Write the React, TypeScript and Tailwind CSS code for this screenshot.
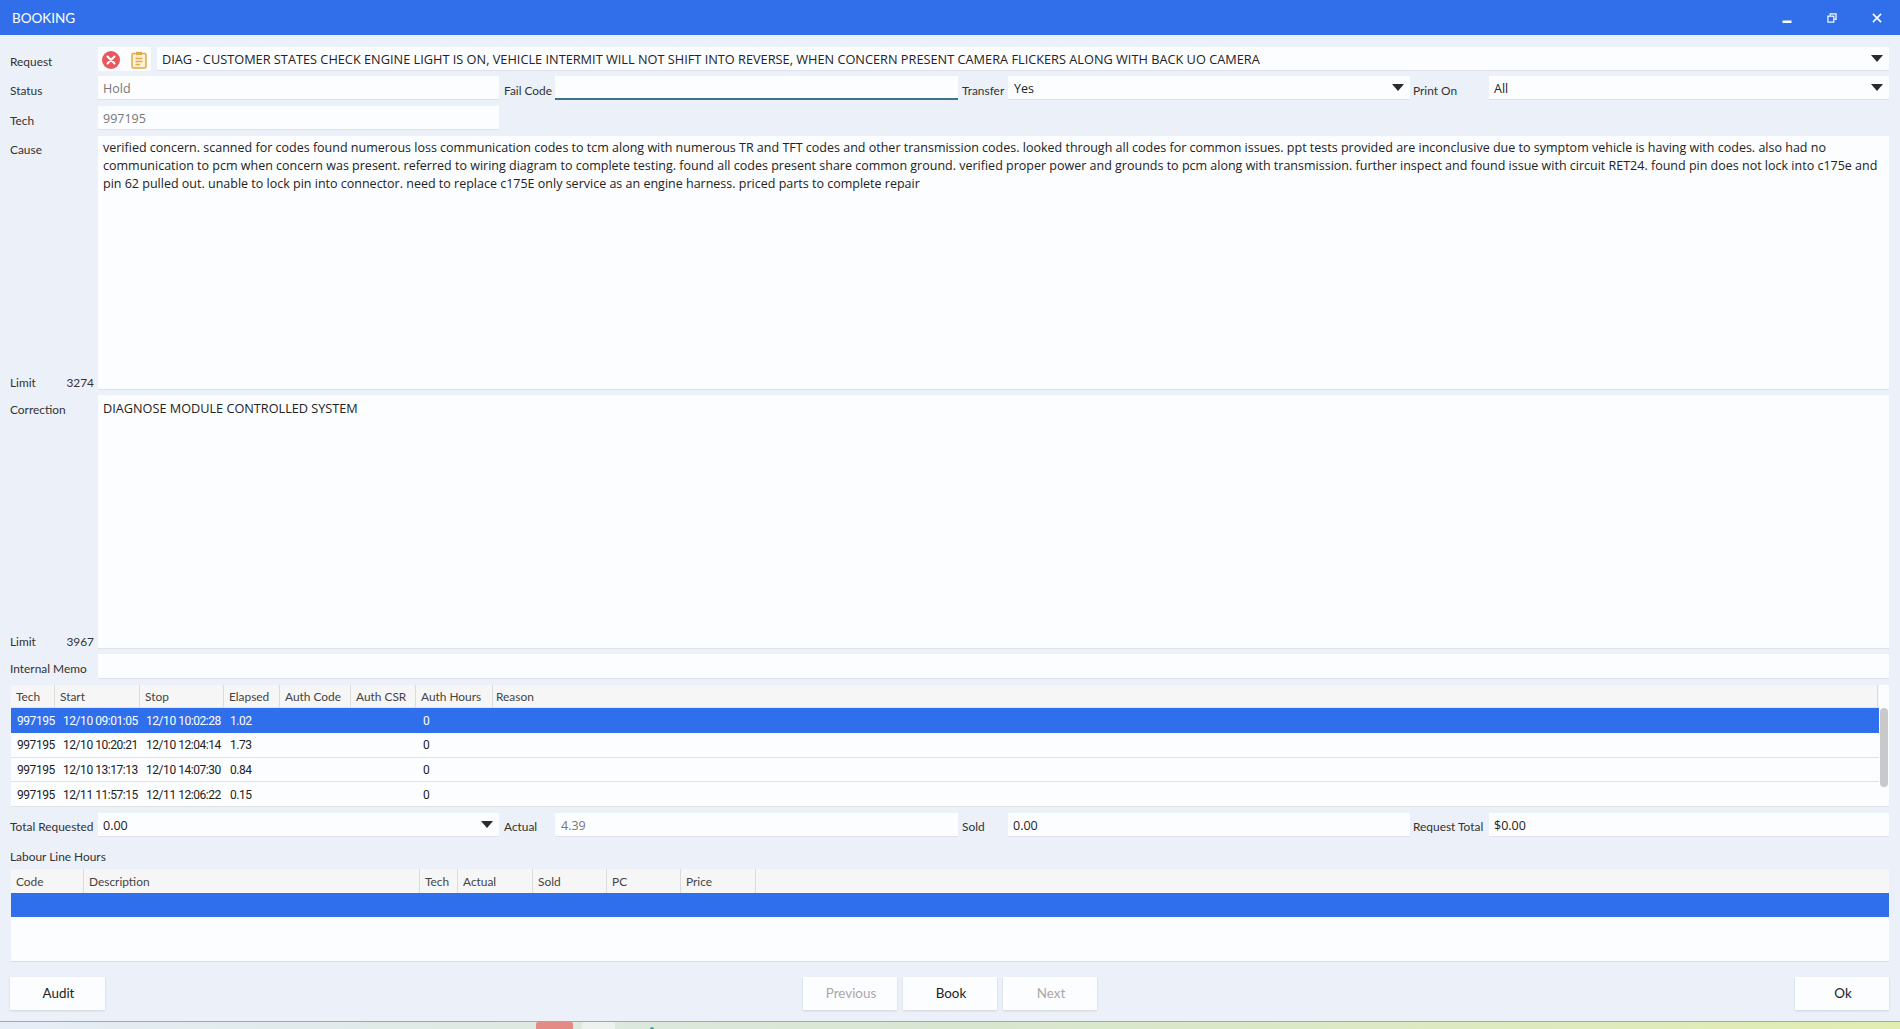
import type { ReactNode } from "react";

const causeLines = [
  "verified concern. scanned for codes found numerous loss communication codes to tcm along with numerous TR and TFT codes and other transmission codes. looked through all codes for common issues. ppt tests provided are inconclusive due to symptom vehicle is having with codes. also had no",
  "communication to pcm when concern was present. referred to wiring diagram to complete testing. found all codes present share common ground. verified proper power and grounds to pcm along with transmission. further inspect and found issue with circuit RET24. found pin does not lock into c175e and",
  "pin 62 pulled out. unable to lock pin into connector. need to replace c175E only service as an engine harness. priced parts to complete repair",
];

const laborCols = [
  { label: "Tech", width: "w-[44px]" },
  { label: "Start", width: "w-[85px]" },
  { label: "Stop", width: "w-[84px]" },
  { label: "Elapsed", width: "w-[56px]" },
  { label: "Auth Code", width: "w-[71px]" },
  { label: "Auth CSR", width: "w-[65px]" },
  { label: "Auth Hours", width: "w-[77px]" },
];

const laborRows = [
  ["997195", "12/10 09:01:05", "12/10 10:02:28", "1.02"],
  ["997195", "12/10 10:20:21", "12/10 12:04:14", "1.73"],
  ["997195", "12/10 13:17:13", "12/10 14:07:30", "0.84"],
  ["997195", "12/11 11:57:15", "12/11 12:06:22", "0.15"],
];

const lineCols = [
  { label: "Code", width: "w-[73px]" },
  { label: "Description", width: "w-[336px]" },
  { label: "Tech", width: "w-[38px]" },
  { label: "Actual", width: "w-[75px]" },
  { label: "Sold", width: "w-[74px]" },
  { label: "PC", width: "w-[74px]" },
  { label: "Price", width: "w-[75px]" },
];

function Label({ children, className = "" }: { children: ReactNode; className?: string }) {
  return <span className={`shrink-0 font-['Lato',sans-serif] text-[11.9px] text-[#333] whitespace-nowrap ${className}`}>{children}</span>;
}

function Field({ value, muted, className = "" }: { value?: string; muted?: boolean; className?: string }) {
  return (
    <div className={`h-full flex items-center pl-[5px] pr-[6px] bg-[#fcfdff] border-b border-[#dfe2ea] text-[12.5px] ${muted ? "text-[#777]" : "text-[#222]"} ${className}`}>
      {value}
    </div>
  );
}

function Caret() {
  return (
    <svg width="12" height="7" viewBox="0 0 12 7" className="shrink-0 -mt-[1px]">
      <path d="M0 0 H12 L6 7 Z" fill="#2b2b2b" />
    </svg>
  );
}

function Combo({ value, className = "", textClass = "" }: { value: string; className?: string; textClass?: string }) {
  return (
    <div className={`h-full flex items-center justify-between pl-[5px] pr-[6px] bg-[#fcfdff] border-b border-[#dfe2ea] text-[12.5px] text-[#222] ${className}`}>
      <span className={`whitespace-nowrap ${textClass}`}>{value}</span>
      <Caret />
    </div>
  );
}

function HeaderCell({ label, width }: { label: string; width: string }) {
  return (
    <div className={`${width} shrink-0 h-full flex items-center pl-[5px] pt-[2px] border-r border-[#dcdcdc] font-['Lato',sans-serif] text-[11.9px] text-[#444]`}>
      {label}
    </div>
  );
}

function Button({ label, muted, className = "" }: { label: string; muted?: boolean; className?: string }) {
  return (
    <button className={`h-[33px] pl-[2px] bg-[#fcfdff] shadow-[0_1px_2px_rgba(0,0,0,0.12)] font-['Lato',sans-serif] text-[13.4px] ${muted ? "text-[#a8a8a8]" : "text-[#222]"} ${className}`}>
      {label}
    </button>
  );
}

export default function App() {
  return (
    <div className="font-['Open_Sans','Noto_Sans',sans-serif] h-[1029px] w-full flex flex-col overflow-hidden bg-[#ecf0f8]">
      {/* Title bar */}
      <div className="h-[35px] shrink-0 flex items-center justify-between bg-[#316fea] pl-[12px] pr-[18px] text-white">
        <span className="font-['Lato',sans-serif] text-[13.5px] pt-[1px]">BOOKING</span>
        <div className="flex items-center gap-[35px]">
          <svg width="10" height="10" viewBox="0 0 10 10" className="mt-[1px]"><path d="M0.5 7.5H9.5V10H0.5Z" fill="#fff" /></svg>
          <svg width="10" height="10" viewBox="0 0 11 11" fill="none" stroke="#fff" strokeWidth="1.3"><path d="M3.5 3V1H10V7H8" /><rect x="1" y="3.5" width="6.5" height="6.5" /></svg>
          <svg width="10" height="10" viewBox="0 0 11 11" fill="none" stroke="#fff" strokeWidth="1.7"><path d="M1 1L10 10M10 1L1 10" /></svg>
        </div>
      </div>

      <div className="flex-1 flex flex-col pl-[10px] pr-[11px] pt-[12px]">
        {/* Request */}
        <div className="h-[24px] flex items-center">
          <Label className="w-[88px] pt-[5px]">Request</Label>
          <div className="w-[53px] h-full flex items-center gap-[11px] pl-[4px] bg-[#fcfdff]">
            <svg width="18" height="18" viewBox="0 0 18 18" className="mt-[2px]">
              <circle cx="9" cy="9" r="9" fill="#e8595f" />
              <path d="M5.5 5.5L12.5 12.5M12.5 5.5L5.5 12.5" stroke="#fff" strokeWidth="2" strokeLinecap="round" />
            </svg>
            <svg width="16" height="18" viewBox="0 0 16 18" fill="none" className="mt-[2px]">
              <rect x="1" y="2.5" width="14" height="14.5" rx="1.5" fill="#fdf3d4" stroke="#e0a948" strokeWidth="1.5" />
              <rect x="5" y="0.8" width="6" height="3.2" fill="#e0a948" />
              <path d="M4.5 7.5H11.5M4.5 10.5H11.5M4.5 13.5H9" stroke="#e0a948" strokeWidth="1.3" />
            </svg>
          </div>
          <Combo className="flex-1 ml-[6px]" textClass="text-[12.75px] pt-[2px]" value="DIAG - CUSTOMER STATES CHECK ENGINE LIGHT IS ON, VEHICLE INTERMIT WILL NOT SHIFT INTO REVERSE, WHEN CONCERN PRESENT CAMERA FLICKERS ALONG WITH BACK UO CAMERA" />
        </div>

        {/* Status row */}
        <div className="h-[24px] mt-[5px] flex items-center">
          <Label className="w-[88px] pt-[5px]">Status</Label>
          <Field className="w-[401px] pt-[3px]" value="Hold" muted />
          <Label className="w-[51px] ml-[5px] pt-[5px]">Fail Code</Label>
          <div className="w-[403px] h-full bg-[#fcfdff] border-b-2 border-[#3d7390]" />
          <Label className="w-[46px] ml-[4px] pt-[5px]">Transfer</Label>
          <Combo className="w-[402px]" textClass="pt-[4px] ml-[1px]" value="Yes" />
          <Label className="w-[76px] ml-[3px] pt-[5px]">Print On</Label>
          <Combo className="flex-1" textClass="pt-[4px]" value="All" />
        </div>

        {/* Tech */}
        <div className="h-[24px] mt-[6px] flex items-center">
          <Label className="w-[88px] pt-[5px]">Tech</Label>
          <Field className="w-[401px] pt-[3px]" value="997195" muted />
        </div>

        {/* Cause */}
        <div className="h-[254px] mt-[6px] flex">
          <div className="w-[88px] shrink-0 flex flex-col justify-between pt-[5px]">
            <Label>Cause</Label>
            <div className="flex justify-between pr-[4px] translate-y-[2px]"><Label>Limit</Label><Label>3274</Label></div>
          </div>
          <div className="flex-1 min-w-0 bg-[#fcfdff] border-b border-[#dfe2ea] pt-[3px] pl-[5px] text-[12.5px] leading-[18px] text-[#222]">
            {causeLines.map((line) => (
              <div key={line} className="whitespace-nowrap">{line}</div>
            ))}
          </div>
        </div>

        {/* Correction */}
        <div className="h-[254px] mt-[5px] flex">
          <div className="w-[88px] shrink-0 flex flex-col justify-between pt-[6px]">
            <Label>Correction</Label>
            <div className="flex justify-between pr-[4px] translate-y-[2px]"><Label>Limit</Label><Label>3967</Label></div>
          </div>
          <div className="flex-1 min-w-0 bg-[#fcfdff] border-b border-[#dfe2ea] pt-[4px] pl-[5px] text-[12.7px] leading-[18px] text-[#222]">
            DIAGNOSE MODULE CONTROLLED SYSTEM
          </div>
        </div>

        {/* Memo */}
        <div className="h-[25px] mt-[5px] flex items-center">
          <Label className="w-[88px] pt-[4px]">Internal Memo</Label>
          <Field className="flex-1" />
        </div>

        {/* Labor table */}
        <div className="h-[122px] mt-[6px] ml-[1px] flex bg-[#fcfdff] border-b border-[#dfe2ea]">
          <div className="flex-1 flex flex-col min-w-0">
            <div className="h-[23px] shrink-0 flex bg-[#f6f6f6] border-b border-[#e4e4e4] pr-[1px]">
              {laborCols.map((col) => (
                <HeaderCell key={col.label} label={col.label} width={col.width} />
              ))}
              <div className="flex-1 flex items-center pl-[3px] pt-[2px] border-r border-[#dcdcdc] font-['Lato',sans-serif] text-[11.9px] text-[#444]">Reason</div>
            </div>
            {laborRows.map((row, i) => (
              <div key={row[1]} className={`h-[24.75px] shrink-0 flex items-center pt-[1px] font-['Roboto',sans-serif] text-[12px] tracking-[-0.45px] ${i === 0 ? "bg-[#2f6fec] text-white" : "text-[#222] border-b border-[#e2e2e2]"}`}>
                <div className="w-[44px] pl-[6px] whitespace-nowrap">{row[0]}</div>
                <div className="w-[85px] pl-[8px] whitespace-nowrap">{row[1]}</div>
                <div className="w-[84px] pl-[6px] whitespace-nowrap">{row[2]}</div>
                <div className="w-[56px] pl-[6px] whitespace-nowrap">{row[3]}</div>
                <div className="w-[136px]" />
                <div className="pl-[7px]">0</div>
              </div>
            ))}
          </div>
          <div className="w-[10px] shrink-0 pt-[23px] pl-[1px] pr-[1px]">
            <div className="h-[79px] rounded-full bg-[#c9c9c9]" />
          </div>
        </div>

        {/* Totals */}
        <div className="h-[24px] mt-[6px] flex items-center">
          <Label className="w-[88px] pt-[3px]">Total Requested</Label>
          <Combo className="w-[401px]" textClass="pt-[4px]" value="0.00" />
          <Label className="w-[51px] ml-[5px] pt-[3px]">Actual</Label>
          <Field className="w-[403px] pt-[4px] pl-[6px]" value="4.39" muted />
          <Label className="w-[46px] ml-[4px] pt-[3px]">Sold</Label>
          <Field className="w-[402px] pt-[4px]" value="0.00" />
          <Label className="w-[76px] ml-[3px] pt-[3px]">Request Total</Label>
          <Field className="flex-1 pt-[4px]" value="$0.00" />
        </div>

        <Label className="mt-[11px] leading-[18px]">Labour Line Hours</Label>

        {/* Labour lines */}
        <div className="h-[93px] mt-[3px] ml-[1px] bg-[#fcfdff] border-b border-[#d8dbe2] flex flex-col">
          <div className="h-[24px] shrink-0 flex bg-[#f6f6f6]">
            {lineCols.map((col) => (
              <HeaderCell key={col.label} label={col.label} width={col.width} />
            ))}
          </div>
          <div className="h-[24px] shrink-0 bg-[#2f6fec]" />
        </div>

        {/* Actions */}
        <div className="mt-[15px] flex items-center justify-between">
          <Button label="Audit" className="w-[95px]" />
          <div className="flex gap-[6px]">
            <Button label="Previous" muted className="w-[94px]" />
            <Button label="Book" className="w-[94px]" />
            <Button label="Next" muted className="w-[94px]" />
          </div>
          <Button label="Ok" className="w-[94px]" />
        </div>
      </div>

      {/* Sliver of desktop below the window */}
      <div className="h-[8px] shrink-0 border-t border-[#a3a79c] bg-gradient-to-r from-[#e6edf7] via-[#d8e6d0] to-[#e2edb2] flex">
        <div className="ml-[536px] w-[37px] h-full bg-[#e58b86] rounded-t-[2px]" />
        <div className="ml-[9px] w-[33px] h-full bg-[#eef2ee] rounded-t-[2px]" />
        <div className="ml-[35px] mt-[5px] w-[4px] h-[3px] bg-[#35a7a0] rounded-t-full" />
      </div>
    </div>
  );
}
